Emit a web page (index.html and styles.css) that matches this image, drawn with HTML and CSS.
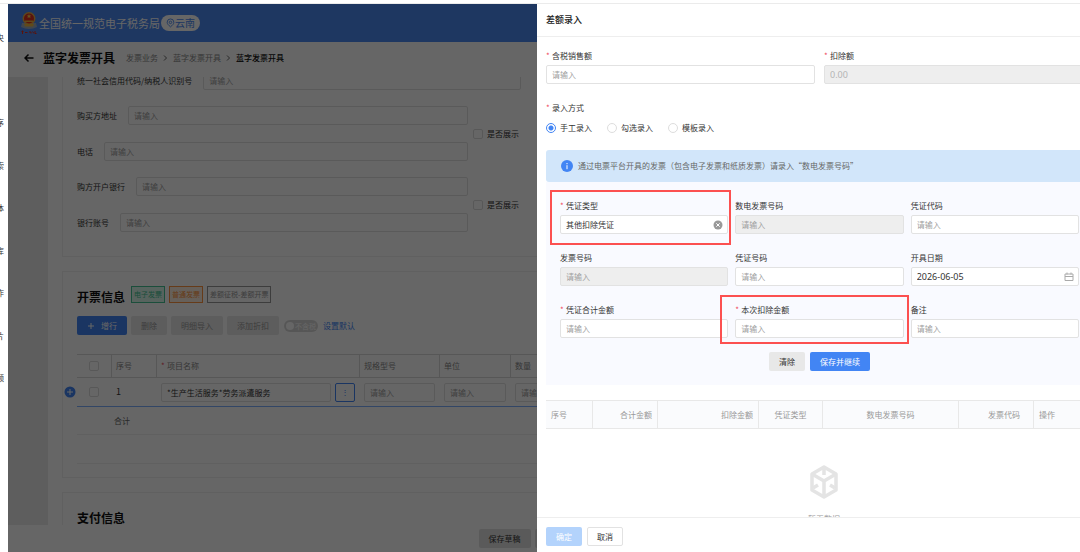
FILE: index.html
```html
<!DOCTYPE html>
<html lang="zh-CN">
<head>
  <meta charset="UTF-8" />
  <meta name="viewport" content="width=device-width, initial-scale=1" />
  <title>蓝字发票开具</title>
  <link rel="stylesheet" href="styles.css">
</head>
<body>
  <div class="topline"></div>
  <div class="shell">
    <aside class="rail">
      <span>央</span>
      <span class="faint">：</span>
      <span>序</span>
      <span>索</span>
      <span>体</span>
      <span>库</span>
      <span>作</span>
      <span>片</span>
      <span>频</span>
    </aside>

    <div class="app">
      <header class="app-header">
        <svg class="emblem" viewBox="0 0 18 24" aria-hidden="true">
          <path d="M2 12 L1 16 Q9 20 17 16 L16 12 Z" fill="#9fb0c4"/>
          <circle cx="9" cy="7.500" r="6.500" fill="#e8b04a"/>
          <circle cx="9" cy="7.500" r="5" fill="#e0301e"/>
          <path d="M9 3l.7 1.500 1.600.1-1.200 1 .4 1.500L9 6.300l-1.500.8.4-1.500-1.200-1 1.600-.1z" fill="#ffd34d"/>
          <path d="M5 9.500h8v1.500H5zM4 13h10l-1 2.500H5z" fill="#f0b840"/>
          <path d="M1.500 20.500h2M2.500 19.500v3.500M5 21.500h2.500M9 21h2v1.500M12.500 20.500l1.500 2M15 20v2.500h1.500" stroke="#e0301e" fill="none"/>
        </svg>
        <span class="site-name">全国统一规范电子税务局</span>
        <span class="region">
          <svg viewBox="0 0 10 10" aria-hidden="true"><path d="M5 9.300C2.800 7.400 1.300 6 1.300 4.200a3.700 3.700 0 0 1 7.400 0C8.700 6 7.200 7.400 5 9.300z"/><circle cx="5" cy="4.300" r="1.400"/></svg>
          云南
        </span>
      </header>

      <div class="page-head">
        <svg class="back" viewBox="0 0 10 10" aria-hidden="true"><path d="M9.500 5H1M4.500 1.500 1 5l3.500 3.500"/></svg>
        <h1>蓝字发票开具</h1>
        <nav class="crumbs">
          <a href="#">发票业务</a>
          <svg viewBox="0 0 5 8" aria-hidden="true"><path d="M1 1.500 3.500 4 1 6.500"/></svg>
          <a href="#">蓝字发票开具</a>
          <svg viewBox="0 0 5 8" aria-hidden="true"><path d="M1 1.500 3.500 4 1 6.500"/></svg>
          <b>蓝字发票开具</b>
        </nav>
      </div>

      <div class="scroll">
        <div class="side-blank"></div>
        <div class="cards">
          <section class="card buyer">
            <div class="row">
              <label for="taxId">统一社会信用代码/纳税人识别号</label>
              <input class="field" id="taxId" type="text" placeholder="请输入" />
            </div>
            <div class="pair">
              <div class="pair-fields">
                <div class="row">
                  <label for="addr">购买方地址</label>
                  <input class="field" id="addr" type="text" placeholder="请输入" />
                </div>
                <div class="row">
                  <label for="tel">电话</label>
                  <input class="field" id="tel" type="text" placeholder="请输入" />
                </div>
              </div>
              <label class="check"><input type="checkbox" />是否展示</label>
            </div>
            <div class="pair">
              <div class="pair-fields">
                <div class="row">
                  <label for="bank">购方开户银行</label>
                  <input class="field" id="bank" type="text" placeholder="请输入" />
                </div>
                <div class="row">
                  <label for="account">银行账号</label>
                  <input class="field" id="account" type="text" placeholder="请输入" />
                </div>
              </div>
              <label class="check"><input type="checkbox" />是否展示</label>
            </div>
          </section>

          <section class="card">
            <div class="card-title">
              <h2>开票信息</h2>
              <span class="tag green">电子发票</span>
              <span class="tag orange">普通发票</span>
              <span class="tag gray">差额征税-差额开票</span>
            </div>
            <div class="toolbar">
              <button class="btn primary add" type="button">
                <svg viewBox="0 0 8 8" aria-hidden="true"><path d="M4 1v6M1 4h6"/></svg>增行
              </button>
              <button class="btn off" type="button" disabled>删除</button>
              <button class="btn off" type="button" disabled>明细导入</button>
              <button class="btn off" type="button" disabled>添加折扣</button>
              <label class="switch"><input type="checkbox" /><span>不含税</span></label>
              <a class="link" href="#">设置默认</a>
            </div>
            <div class="items-wrap">
              <table class="items">
                <colgroup>
                  <col class="c-check"><col class="c-no"><col class="c-name"><col class="c-spec"><col class="c-unit"><col>
                </colgroup>
                <thead>
                  <tr>
                    <th class="center"><input type="checkbox" aria-label="序号" /></th>
                    <th>序号</th>
                    <th><span class="req">项目名称</span></th>
                    <th>规格型号</th>
                    <th>单位</th>
                    <th>数量</th>
                  </tr>
                </thead>
                <tbody>
                  <tr class="current">
                    <td class="center"><input type="checkbox" aria-label="1" /></td>
                    <td class="num">1</td>
                    <td>
                      <div class="name-cell">
                        <input class="field" type="text" aria-label="项目名称" value="*生产生活服务*劳务派遣服务" />
                        <button class="more" type="button">⋮</button>
                      </div>
                    </td>
                    <td><input class="field" type="text" aria-label="规格型号" placeholder="请输入" /></td>
                    <td><input class="field" type="text" aria-label="单位" placeholder="请输入" /></td>
                    <td><input class="field" type="text" aria-label="数量" placeholder="请输入" /></td>
                  </tr>
                  <tr class="sum">
                    <td></td>
                    <td colspan="5">合计</td>
                  </tr>
                  <tr class="blank"><td colspan="6"></td></tr>
                </tbody>
              </table>
              <svg class="row-add" viewBox="0 0 12 12" aria-hidden="true"><circle cx="6" cy="6" r="5.500"/><path d="M6 3v6M3 6h6"/></svg>
            </div>
          </section>

          <section class="card">
            <div class="card-title"><h2>支付信息</h2></div>
          </section>
        </div>
      </div>

      <footer class="app-footer">
        <button class="btn draft" type="button">保存草稿</button>
        <span class="btn rest"></span>
      </footer>
      <div class="mask"></div>
    </div>
  </div>

  <!-- Drawer -->
  <div class="drawer" role="dialog" aria-labelledby="drawerTitle">
    <div class="drawer-head"><h2 id="drawerTitle">差额录入</h2></div>

    <div class="drawer-body">
      <div class="amounts">
        <div class="item">
          <label class="req" for="sales">含税销售额</label>
          <input class="field" id="sales" type="text" placeholder="请输入" />
        </div>
        <div class="item">
          <label class="req" for="deduct">扣除额</label>
          <input class="field figures" id="deduct" type="text" value="0.00" disabled />
        </div>
      </div>

      <div class="mode" role="radiogroup" aria-labelledby="modeLabel">
        <span class="req" id="modeLabel">录入方式</span>
        <div class="radios">
          <label><input type="radio" name="mode" checked />手工录入</label>
          <label><input type="radio" name="mode" />勾选录入</label>
          <label><input type="radio" name="mode" />模板录入</label>
        </div>
      </div>

      <div class="notice">
        <svg viewBox="0 0 12 12" aria-hidden="true"><circle cx="6" cy="6" r="6" fill="#4285f4"/><path d="M6 3v1.200M6 5.200v4" stroke="#fff"/></svg>
        通过电票平台开具的发票（包含电子发票和纸质发票）请录入“数电发票号码”
      </div>

      <form class="voucher">
        <div class="grid">
          <div class="item">
            <label class="req" for="vType">凭证类型</label>
            <div class="with-icon">
              <select class="field" id="vType"><option>其他扣除凭证</option></select>
              <svg class="clear" viewBox="0 0 10 10" aria-hidden="true"><circle cx="5" cy="5" r="4.500" fill="#999"/><path d="M3.300 3.300l3.400 3.400M6.700 3.300 3.300 6.700" stroke="#fff"/></svg>
            </div>
            <div class="highlight type"></div>
          </div>
          <div class="item">
            <label for="eNo">数电发票号码</label>
            <input class="field" id="eNo" type="text" placeholder="请输入" disabled />
          </div>
          <div class="item">
            <label for="vCode">凭证代码</label>
            <input class="field" id="vCode" type="text" placeholder="请输入" />
          </div>
          <div class="item">
            <label for="iNo">发票号码</label>
            <input class="field" id="iNo" type="text" placeholder="请输入" disabled />
          </div>
          <div class="item">
            <label for="vNo">凭证号码</label>
            <input class="field" id="vNo" type="text" placeholder="请输入" />
          </div>
          <div class="item">
            <label for="vDate">开具日期</label>
            <div class="with-icon">
              <input class="field figures" id="vDate" type="text" value="2026-06-05" />
              <svg class="calendar" viewBox="0 0 10 10" aria-hidden="true"><path d="M1 2h8v6.500H1zM1 4.500h8M3 .5v2M7 .5v2"/></svg>
            </div>
          </div>
          <div class="item">
            <label class="req" for="vTotal">凭证合计金额</label>
            <input class="field" id="vTotal" type="text" placeholder="请输入" />
          </div>
          <div class="item">
            <label class="req" for="vDeduct">本次扣除金额</label>
            <input class="field" id="vDeduct" type="text" placeholder="请输入" />
            <div class="highlight amount"></div>
          </div>
          <div class="item">
            <label for="remark">备注</label>
            <input class="field" id="remark" type="text" placeholder="请输入" />
          </div>
        </div>
        <div class="actions">
          <button class="btn clear-btn" type="button">清除</button>
          <button class="btn primary" type="button">保存并继续</button>
        </div>
      </form>

      <table class="records">
        <colgroup>
          <col class="r-no"><col class="r-total"><col class="r-deduct"><col class="r-type"><col class="r-enum"><col class="r-code"><col>
        </colgroup>
        <thead>
          <tr>
            <th>序号</th>
            <th class="right">合计金额</th>
            <th class="right">扣除金额</th>
            <th class="center">凭证类型</th>
            <th class="center">数电发票号码</th>
            <th class="right code">发票代码</th>
            <th>操作</th>
          </tr>
        </thead>
      </table>

      <div class="empty">
        <svg viewBox="0 0 28 34" aria-hidden="true">
          <path d="M14 2 26 9v16l-12 7L2 25V9z" fill="none" stroke="#e4e4e4" stroke-width="3.500" stroke-linejoin="round"/>
          <path d="M2 9l12 7 12-7M14 16v16M14 3v7M3 23l5-3M25 23l-5-3" fill="none" stroke="#e4e4e4" stroke-width="3.500"/>
        </svg>
        <p>暂无数据</p>
      </div>
    </div>

    <div class="drawer-foot">
      <button class="btn confirm" type="button" disabled>确定</button>
      <button class="btn plain" type="button">取消</button>
    </div>
  </div>
</body>
</html>
```

FILE: styles.css
```css
/* Base */
* {
  box-sizing: border-box;
}

body {
  margin: 0;
  height: 100vh;
  display: flex;
  flex-direction: column;
  overflow: hidden;
  background: #fff;
  color: #333;
  font-family: "Noto Sans CJK SC", "Noto Sans", sans-serif;
  font-size: 8px;
  line-height: 12px;
}

h1, h2, p {
  margin: 0;
}

a {
  color: inherit;
  text-decoration: none;
}

input, select, button {
  font: inherit;
  color: inherit;
  margin: 0;
}

svg {
  display: block;
  flex: none;
}

.topline {
  flex: none;
  height: 4px;
  border-bottom: 1px solid #ebebeb;
}

.shell {
  flex: 1;
  min-height: 0;
  display: flex;
}

/* Cut-off menu of the outer page */
.rail {
  width: 8px;
  padding: 28px 4px 168px 0;
  display: flex;
  flex-direction: column;
  align-items: flex-end;
  justify-content: space-between;
  overflow: hidden;
}

.rail .faint {
  color: #99a;
}

/* Fields */
.field {
  display: block;
  width: 100%;
  min-width: 0;
  height: 19px;
  padding: 0 5px;
  border: 1px solid #e2e2e2;
  border-radius: 2px;
  background: #fff;
  outline: none;
  appearance: none;
}

.field::placeholder {
  color: #a0a0a0;
  opacity: 1;
}

.field:disabled {
  background: #eee;
  color: #b4b4b4;
}

.field.figures {
  font-family: "Noto Sans", sans-serif;
  font-size: 9px;
}

input[type="checkbox"] {
  appearance: none;
  width: 10px;
  height: 10px;
  border: 1px solid #dcdcdc;
  border-radius: 2px;
}

.req::before {
  content: "*";
  display: inline-block;
  width: 6px;
  color: #f0485a;
}

/* Buttons */
.btn {
  flex: none;
  height: 19px;
  padding: 0 9px;
  border: 1px solid transparent;
  border-radius: 2px;
  line-height: 17px;
  white-space: nowrap;
}

.btn.primary {
  background: #4285f4;
  color: #fff;
}

.btn.off {
  background: #e8e8e8;
  color: #999;
}

/* Tax bureau page under the mask */
.app {
  position: relative;
  flex: 1;
  min-width: 0;
  display: flex;
  flex-direction: column;
  overflow: hidden;
}

.mask {
  position: absolute;
  inset: 0;
  background: rgba(0, 0, 0, 0.6);
}

.app-header {
  flex: none;
  height: 38px;
  padding-left: 12px;
  display: flex;
  align-items: center;
  background: #4b89f2;
}

.emblem {
  width: 18px;
  height: 24px;
}

.site-name {
  margin-left: 1px;
  font-size: 11px;
  color: #fff;
  white-space: nowrap;
}

.region {
  height: 16px;
  margin-left: 1px;
  padding: 0 5px;
  display: flex;
  align-items: center;
  border-radius: 8px;
  background: #fff;
  color: #4b89f2;
  font-size: 10px;
}

.region svg {
  width: 9px;
  height: 10px;
  fill: none;
  stroke: #4b89f2;
}

.page-head {
  flex: none;
  height: 35px;
  padding: 0 0 3px 16px;
  display: flex;
  align-items: center;
}

.back {
  width: 10px;
  height: 10px;
  fill: none;
  stroke: #111;
  stroke-width: 1.5;
}

.page-head h1 {
  margin-left: 9px;
  font-size: 12px;
  color: #111;
}

.crumbs {
  margin-left: 11px;
  display: flex;
  align-items: center;
  gap: 5px;
  color: #888;
}

.crumbs svg {
  width: 5px;
  height: 8px;
  fill: none;
  stroke: #666;
}

.crumbs b {
  color: #111;
  font-weight: 500;
}

.scroll {
  flex: 1;
  min-height: 0;
  display: flex;
  overflow: hidden;
}

.side-blank {
  flex: none;
  width: 40px;
  background: #ebebeb;
}

.cards {
  flex: 1;
  min-width: 0;
  padding-left: 14px;
  display: flex;
  flex-direction: column;
  gap: 14px;
}

.card {
  flex: none;
  padding: 14px 14px 13px;
  border: 1px solid #f0f0f0;
}

/* Buyer form, already scrolled past its first rows */
.buyer {
  margin-top: -6px;
  padding: 0 14px 24px;
  border-top: 0;
  display: flex;
  flex-direction: column;
  gap: 16px;
}

.row {
  display: flex;
  align-items: center;
  gap: 11px;
}

.row label {
  flex: none;
}

.buyer > .row,
.pair {
  width: 100%;
  max-width: 444px;
}

.pair {
  display: flex;
  align-items: center;
  gap: 5px;
}

.pair-fields {
  flex: 1;
  display: flex;
  flex-direction: column;
  gap: 17px;
}

.check {
  flex: none;
  width: 48px;
  display: flex;
  align-items: center;
  gap: 4px;
  white-space: nowrap;
}

.card-title {
  display: flex;
  gap: 4px;
  margin-bottom: 9px;
}

.card-title h2 {
  margin-right: 2px;
  font-size: 12px;
  line-height: 21px;
  color: #111;
}

.tag {
  height: 17px;
  padding: 0 2px;
  border: 1px solid;
  font-size: 7px;
  line-height: 15px;
}

.tag.green {
  color: #45c393;
  background: #d9f7ea;
}

.tag.orange {
  color: #ff9440;
  background: #fff0e2;
}

.tag.gray {
  color: #999;
}

.toolbar {
  display: flex;
  align-items: center;
  gap: 4px;
  margin-bottom: 19px;
}

.btn.add {
  display: flex;
  align-items: center;
  gap: 6px;
  padding: 0 9px;
}

.add svg {
  width: 8px;
  height: 8px;
  stroke: #fff;
}

.switch {
  width: 34px;
  height: 12px;
  margin: 0 1px;
  padding: 0 2px;
  display: flex;
  align-items: center;
  gap: 1px;
  border-radius: 6px;
  background: #d8d8d8;
  color: #fff;
  font-size: 7px;
  white-space: nowrap;
}

.switch input[type="checkbox"] {
  flex: none;
  width: 8px;
  height: 8px;
  border: 0;
  border-radius: 50%;
  background: #fff;
}

.link {
  color: #4285f4;
}

.items-wrap {
  position: relative;
}

.items,
.records {
  width: 100%;
  table-layout: fixed;
  border-spacing: 0;
}

.items th,
.items td {
  padding: 0 5px 0 4px;
  text-align: left;
  font-weight: 400;
}

.items th {
  height: 24px;
  border: solid #dadada;
  border-width: 1px 1px 1px 0;
  color: #888;
}

.items .center,
.records .center {
  text-align: center;
}

.items .center input {
  display: block;
  margin: 0 auto;
}

.items td {
  height: 29px;
  border-bottom: 1px solid #f0f0f0;
}

.items .current td {
  border-color: #7eb0ff;
}

.items .num {
  font-size: 9px;
}

.items .sum td {
  height: 28px;
  padding-left: 2px;
  color: #666;
}

.c-check { width: 35px; }
.c-no { width: 45px; }
.c-name { width: 203px; }
.c-spec { width: 80px; }
.c-unit { width: 71px; }

.name-cell {
  display: flex;
  gap: 4px;
}

.more {
  flex: none;
  width: 20px;
  height: 19px;
  padding: 0;
  border: 1px solid #4285f4;
  border-radius: 2px;
  background: #fff;
  color: #4285f4;
}

.row-add {
  position: absolute;
  left: -13px;
  top: 32px;
  width: 12px;
  height: 12px;
  fill: #4285f4;
  stroke: none;
}

.row-add path {
  stroke: #fff;
}

.app-footer {
  flex: none;
  height: 27px;
  display: flex;
  align-items: center;
  justify-content: center;
  gap: 4px;
  background: #fff;
}

.btn.draft,
.btn.rest {
  background: #e2e2e2;
}

.btn.rest {
  width: 75px;
}

/* Drawer */
.drawer {
  position: absolute;
  top: 4px;
  right: 0;
  bottom: 0;
  width: calc(50% + 3px);
  display: flex;
  flex-direction: column;
  background: #fff;
  overflow: hidden;
}

.drawer-head {
  flex: none;
  height: 33px;
  padding: 0 9px;
  display: flex;
  align-items: center;
  border-bottom: 1px solid #eee;
}

.drawer-head h2 {
  font-size: 9px;
  font-weight: 500;
  color: #222;
}

.drawer-body {
  flex: 1;
  min-height: 0;
  padding: 13px 0 0 9px;
  overflow: hidden;
}

.amounts {
  display: grid;
  grid-template-columns: 1fr 1fr;
  gap: 9px;
  margin-right: -13px;
}

.item {
  position: relative;
  display: flex;
  flex-direction: column;
  gap: 3px;
}

.mode {
  margin-top: 18px;
}

.radios {
  display: flex;
  gap: 15px;
  margin-top: 8px;
}

.radios label {
  display: flex;
  align-items: center;
  gap: 4px;
}

.radios input {
  appearance: none;
  width: 10px;
  height: 10px;
  border: 1px solid #ddd;
  border-radius: 50%;
}

.radios input:checked {
  border-color: #4285f4;
  background: radial-gradient(circle, #4285f4 0 2px, #fff 3px);
}

.notice {
  height: 32px;
  margin-top: 16px;
  padding-left: 15px;
  display: flex;
  align-items: center;
  gap: 5px;
  border-radius: 3px 0 0 3px;
  background: #d2e6fa;
  color: #666;
  white-space: nowrap;
}

.notice svg {
  width: 12px;
  height: 12px;
}

.voucher {
  padding: 18px 1px 14px 14px;
  background: #f9faff;
}

.grid {
  display: grid;
  grid-template-columns: repeat(3, 1fr);
  gap: 18px 7px;
}

.with-icon {
  position: relative;
}

.clear,
.calendar {
  position: absolute;
  top: 5px;
  right: 5px;
  width: 10px;
  height: 10px;
}

.calendar {
  fill: none;
  stroke: #aaa;
}

/* Red frames round the two key fields */
.highlight {
  position: absolute;
  border: 2px solid #fc5050;
  pointer-events: none;
  z-index: 1;
}

.highlight.type {
  inset: -10px -3px -11px -10px;
}

.highlight.amount {
  inset: -9px -5px -6px -15px;
}

.actions {
  display: flex;
  justify-content: center;
  gap: 5px;
  margin-top: 14px;
}

.btn.clear-btn {
  background: #e8e8e8;
}

.records {
  margin-top: 15px;
}

.records th {
  height: 29px;
  padding: 0 5px;
  border: solid #e8e8e8;
  border-width: 1px 1px 1px 0;
  background: #fafbfd;
  color: #999;
  font-weight: 400;
  text-align: left;
}

.records .right {
  text-align: right;
}

.records .code {
  padding-right: 13px;
}

.records th:last-child,
.items th:last-child {
  border-right: 0;
}

.r-no { width: 47px; }
.r-total { width: 65px; }
.r-deduct { width: 101px; }
.r-type { width: 64px; }
.r-enum { width: 136px; }
.r-code { width: 75px; }

.empty {
  padding: 36px 0 0 22px;
  display: flex;
  flex-direction: column;
  align-items: center;
  gap: 14px;
  color: #999;
}

.empty svg {
  width: 28px;
  height: 34px;
}

.drawer-foot {
  flex: none;
  height: 35px;
  padding: 9px;
  display: flex;
  gap: 5px;
  border-top: 1px solid #eee;
}

.btn.confirm {
  background: #b3d3fc;
  color: #fff;
}

.btn.plain {
  border-color: #e2e2e2;
  background: #fff;
}
```
